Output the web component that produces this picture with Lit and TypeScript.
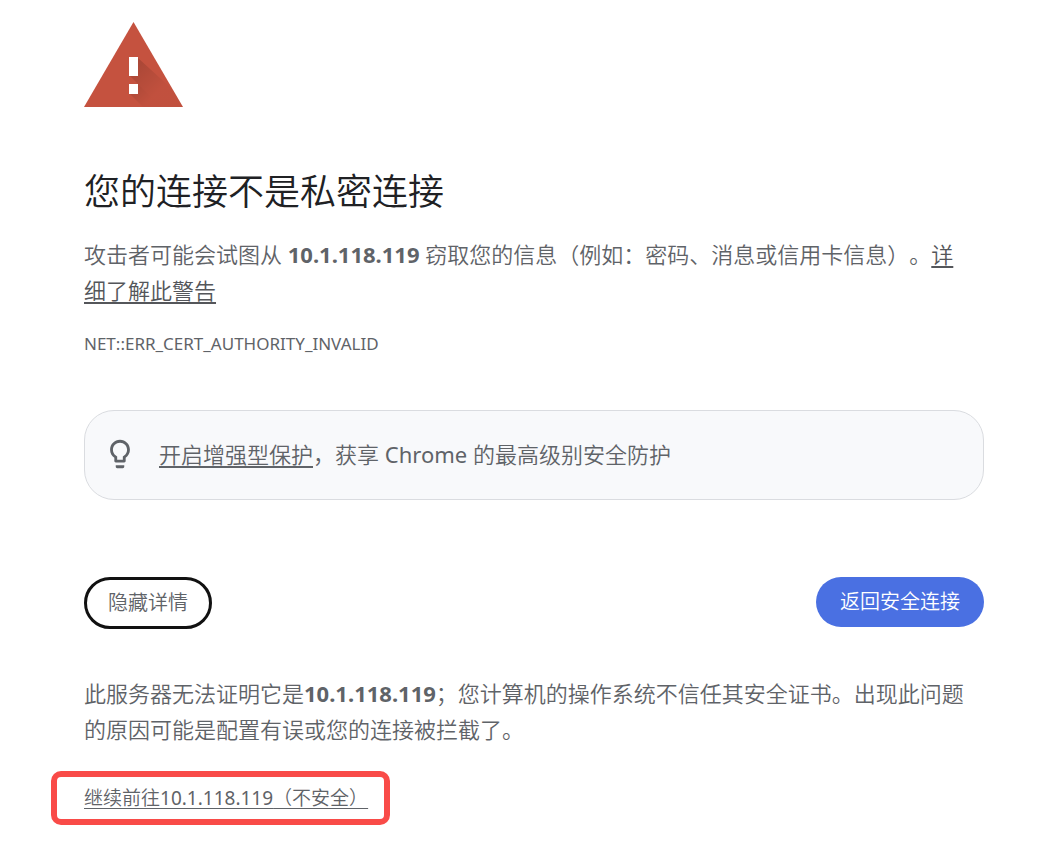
import { LitElement, html, css } from "lit";
import { customElement, state } from "lit/decorators.js";

@customElement("app-root")
export class AppRoot extends LitElement {
  static styles = css`
    :host {
      display: block;
      box-sizing: border-box;
      min-height: 100vh;
      padding: 22px 72px 24px 84px;
      background: #fff;
      color: #5f6368;
      font-family: "Noto Sans", "Noto Sans CJK SC", sans-serif;
      font-size: 22px;
      font-weight: 350;
      line-height: 36px;
      text-spacing-trim: space-all;
    }
    .warning {
      display: block;
      width: 99px;
      height: 85px;
    }
    .title {
      margin: 61px 0 20px;
      color: #202124;
      font-size: 36px;
      font-weight: inherit;
      line-height: 48px;
    }
    .text {
      margin: 0;
    }
    a {
      color: inherit;
      text-decoration: underline;
      text-underline-offset: 3px;
    }
    .text a {
      color: #54565a;
    }
    .latin {
      font-weight: 400;
    }
    .code {
      margin: 24px 0 54px;
      font-size: 17px;
      line-height: 24px;
    }
    .tip {
      display: flex;
      align-items: center;
      gap: 22px;
      box-sizing: border-box;
      min-height: 90px;
      padding: 16px 24px 18px 18px;
      border: 1px solid #dadce0;
      border-radius: 30px;
      background: #f8f9fb;
    }
    .bulb {
      flex: none;
      width: 34px;
      height: 34px;
    }
    .actions {
      display: flex;
      justify-content: space-between;
      align-items: flex-start;
      margin: 77px 0 46px;
    }
    button {
      box-sizing: border-box;
      border: 0;
      border-radius: 26px;
      font-family: inherit;
      font-size: 20px;
      font-weight: inherit;
      line-height: 30px;
      cursor: pointer;
    }
    .secondary {
      padding: 8px 21px;
      border: 3px solid #111;
      background: #fff;
      color: #5f6368;
    }
    .primary {
      padding: 10px 24px;
      background: #4a70e2;
      color: #fff;
    }
    .proceed {
      display: inline-block;
      margin: 24px 0 0 -33px;
      padding: 6px 16px 6px 27px;
      border: 6px solid #f94b48;
      border-radius: 10px;
      font-size: 19px;
      line-height: 30px;
    }
  `;

  @state() private open = true;

  render() {
    return html`
      <main>
        <svg class="warning" viewBox="0 0 99 85" aria-hidden="true">
          <defs>
            <linearGradient id="shade" gradientUnits="userSpaceOnUse" x1="48" y1="40" x2="76" y2="68">
              <stop offset="0" stop-color="#000" stop-opacity=".15" />
              <stop offset="1" stop-color="#000" stop-opacity=".02" />
            </linearGradient>
            <linearGradient id="shade-low" gradientUnits="userSpaceOnUse" x1="48" y1="66" x2="62" y2="82">
              <stop offset="0" stop-color="#000" stop-opacity=".12" />
              <stop offset="1" stop-color="#000" stop-opacity=".02" />
            </linearGradient>
          </defs>
          <path d="M49.5 0 99 85H0Z" fill="#c5523f" />
          <path d="M54 36 88 67 99 85H77L45 53H54Z" fill="url(#shade)" />
          <path d="M54 62 77 85H59L45 71Z" fill="url(#shade-low)" />
          <path d="M45 35h9v19h-9zM45 62h9v10h-9z" fill="#fff" />
        </svg>
        <h1 class="title">您的连接不是私密连接</h1>
        <p class="text">攻击者可能会试图从 <strong>10.1.118.119</strong> 窃取您的信息（例如：密码、消息或信用卡信息）。<a href="#learn">详<br />细了解此警告</a></p>
        <p class="code latin">NET::ERR_CERT_AUTHORITY_INVALID</p>
        <section class="tip">
          <svg class="bulb" viewBox="0 0 24 24" aria-hidden="true" fill="#5f6368">
            <path d="M9 21c0 .5.4 1 1 1h4c.6 0 1-.5 1-1v-1H9v1zm3-19C8.100 2 5 5.100 5 9c0 2.400 1.200 4.500 3 5.700V17c0 .5.4 1 1 1h6c.6 0 1-.5 1-1v-2.300c1.800-1.300 3-3.400 3-5.700 0-3.900-3.100-7-7-7zm2.900 11.100-.9.600V16h-4v-2.300l-.9-.6C7.800 12.200 7 10.600 7 9c0-2.800 2.200-5 5-5s5 2.200 5 5c0 1.600-.8 3.200-2.100 4.100z" />
          </svg>
          <span><a href="#protect">开启增强型保护</a>，获享 <span class="latin">Chrome</span> 的最高级别安全防护</span>
        </section>
        <div class="actions">
          <button class="secondary" type="button" @click=${() => (this.open = !this.open)}>
            ${this.open ? "隐藏详情" : "高级"}
          </button>
          <button class="primary" type="button">返回安全连接</button>
        </div>
        ${this.open
          ? html`<p class="text">此服务器无法证明它是<strong>10.1.118.119</strong>；您计算机的操作系统不信任其安全证书。出现此问题的原因可能是配置有误或您的连接被拦截了。</p>
              <div class="proceed"><a href="#proceed">继续前往<span class="latin">10.1.118.119</span>（不安全）</a></div>`
          : null}
      </main>
    `;
  }
}
